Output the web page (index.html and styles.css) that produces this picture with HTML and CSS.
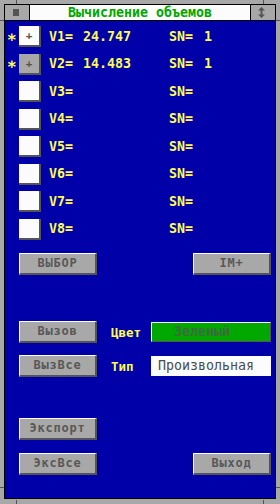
FILE: index.html
```html
<!DOCTYPE html>
<html>
<head>
<meta charset="utf-8">
<link rel="stylesheet" href="styles.css">
</head>
<body>
<div class="window">
  <div class="inner">
    <div class="titlebar">
      <div class="sysbtn"><span class="sysdot"></span></div>
      <div class="title">Вычисление объемов</div>
      <div class="sizebtn">
        <svg width="7" height="11" viewBox="0 0 7 11"><path d="M3.5 0 L7 3.5 L4.5 3.5 L4.5 7.5 L7 7.5 L3.5 11 L0 7.5 L2.5 7.5 L2.5 3.5 L0 3.5 Z" fill="#545454"/></svg>
      </div>
    </div>
    <div class="client">
      <div class="rows">
        <div class="row"><span class="star">∗</span><span class="box">+</span><span class="lbl">V1=</span><span class="val">24.747</span><span class="lbl">SN=</span><span class="val">1</span></div>
        <div class="row"><span class="star">∗</span><span class="box box-gray">+</span><span class="lbl">V2=</span><span class="val">14.483</span><span class="lbl">SN=</span><span class="val">1</span></div>
        <div class="row"><span class="star"></span><span class="box"></span><span class="lbl">V3=</span><span class="val"></span><span class="lbl">SN=</span><span class="val"></span></div>
        <div class="row"><span class="star"></span><span class="box"></span><span class="lbl">V4=</span><span class="val"></span><span class="lbl">SN=</span><span class="val"></span></div>
        <div class="row"><span class="star"></span><span class="box"></span><span class="lbl">V5=</span><span class="val"></span><span class="lbl">SN=</span><span class="val"></span></div>
        <div class="row"><span class="star"></span><span class="box"></span><span class="lbl">V6=</span><span class="val"></span><span class="lbl">SN=</span><span class="val"></span></div>
        <div class="row"><span class="star"></span><span class="box"></span><span class="lbl">V7=</span><span class="val"></span><span class="lbl">SN=</span><span class="val"></span></div>
        <div class="row"><span class="star"></span><span class="box"></span><span class="lbl">V8=</span><span class="val"></span><span class="lbl">SN=</span><span class="val"></span></div>
      </div>
      <div class="btnrow top-btns">
        <div class="btn">ВЫБОР</div>
        <div class="btn btn-right">IM+</div>
      </div>
      <div class="mid">
        <div class="btn">Вызов</div>
        <div class="mlabel">Цвет</div>
        <div class="field field-green">Зеленый</div>
        <div class="btn">ВызВсе</div>
        <div class="mlabel">Тип</div>
        <div class="field field-white">Произвольная</div>
      </div>
      <div class="btnrow export-row">
        <div class="btn">Экспорт</div>
      </div>
      <div class="btnrow last-row">
        <div class="btn">ЭксВсе</div>
        <div class="btn btn-right">Выход</div>
      </div>
    </div>
  </div>
  <span class="tick tick-h tl"></span>
  <span class="tick tick-h tr"></span>
  <span class="tick tick-h bl"></span>
  <span class="tick tick-h br"></span>
  <span class="tick tick-v lt"></span>
  <span class="tick tick-v rt"></span>
  <span class="tick tick-v lb"></span>
  <span class="tick tick-v rb"></span>
</div>
</body>
</html>
```

FILE: styles.css
```css
* { box-sizing: border-box; }
html, body { margin: 0; padding: 0; background: #a8a8a8; }
body { font-family: "DejaVu Sans Mono", "Liberation Mono", monospace; }

.window {
  position: relative;
  width: 280px;
  height: 504px;
  background: #a8a8a8;
  padding: 4px 4px 5px 4px;
}
.inner {
  width: 100%;
  height: 100%;
  border: 1px solid #000;
  display: flex;
  flex-direction: column;
}
.titlebar {
  height: 16px;
  border-bottom: 1px solid #000;
  display: flex;
  background: #fcfcfc;
}
.sysbtn {
  width: 25px;
  border-right: 1px solid #000;
  background: #a8a8a8;
  display: flex;
  align-items: center;
  justify-content: center;
}
.sysdot { width: 6px; height: 7px; background: #545454; margin-right: 2px; }
.title {
  flex: 1;
  text-align: center;
  color: #00a800;
  font-weight: bold;
  font-size: 13.3px;
  line-height: 15px;
}
.sizebtn {
  width: 25px;
  border-left: 1px solid #000;
  background: #a8a8a8;
  display: flex;
  align-items: center;
  justify-content: center;
}
.sizebtn svg { display: block; margin-right: 3px; }

.client {
  flex: 1;
  background: #0000a8;
  display: flex;
  flex-direction: column;
}
.rows { padding-top: 2px; }
.row {
  height: 27.5px;
  display: grid;
  grid-template-columns: 12px 30px 34px 86px 35px 1fr;
  align-items: center;
  padding-left: 2px;
  color: #fcfc54;
  font-weight: bold;
  font-size: 13.3px;
  line-height: 14px;
}
.star { font-size: 16px; line-height: 14px; }
.box {
  width: 22px;
  height: 21px;
  background: #fcfcfc;
  border-right: 2px solid #545454;
  border-bottom: 2px solid #545454;
  color: #545454;
  font-size: 11px;
  line-height: 19px;
  text-align: center;
}
.box-gray { background: #a8a8a8; }

.btnrow {
  display: flex;
  justify-content: space-between;
  padding: 0 4px 0 14px;
}
.top-btns { margin-top: 10px; }
.btn {
  width: 78px;
  height: 22px;
  background: #a8a8a8;
  border-top: 1px solid #fcfcfc;
  border-left: 1px solid #fcfcfc;
  border-bottom: 2px solid #545454;
  border-right: 2px solid #545454;
  color: #585858;
  font-weight: bold;
  font-size: 12px;
  letter-spacing: 0.8px;
  line-height: 19px;
  text-align: center;
}

.mid {
  margin-top: 46px;
  padding-left: 14px;
  display: grid;
  grid-template-columns: 78px 14px 40px 120px;
  grid-template-rows: 22px 22px;
  row-gap: 12px;
  align-items: center;
}
.mid .btn { grid-column: 1; }
.mlabel {
  grid-column: 3;
  color: #fcfc54;
  font-weight: bold;
  font-size: 12.5px;
}
.field {
  grid-column: 4;
  height: 20px;
  font-size: 13.3px;
  line-height: 18px;
}
.field-green {
  background: #00a800;
  border-top: 1px solid #fcfcfc;
  border-left: 1px solid #fcfcfc;
  border-bottom: 1px solid #545454;
  border-right: 1px solid #545454;
  color: #3c6c3c;
  padding-left: 22px;
  font-weight: bold;
}
.field-white {
  background: #fcfcfc;
  color: #4c4c4c;
  padding-left: 7px;
  line-height: 20px;
}

.export-row { margin-top: 41px; }
.last-row { margin-top: 13px; }

.tick { position: absolute; background: #545454; }
.tick-h { width: 4px; height: 1px; }
.tick-v { width: 1px; height: 4px; }
.tl { left: 0; top: 20px; }
.tr { right: 0; top: 20px; }
.bl { left: 0; top: 487px; }
.br { right: 0; top: 487px; }
.lt { left: 16px; top: 0; }
.rt { left: 263px; top: 0; }
.lb { left: 16px; bottom: 0; }
.rb { left: 263px; bottom: 0; }
```
